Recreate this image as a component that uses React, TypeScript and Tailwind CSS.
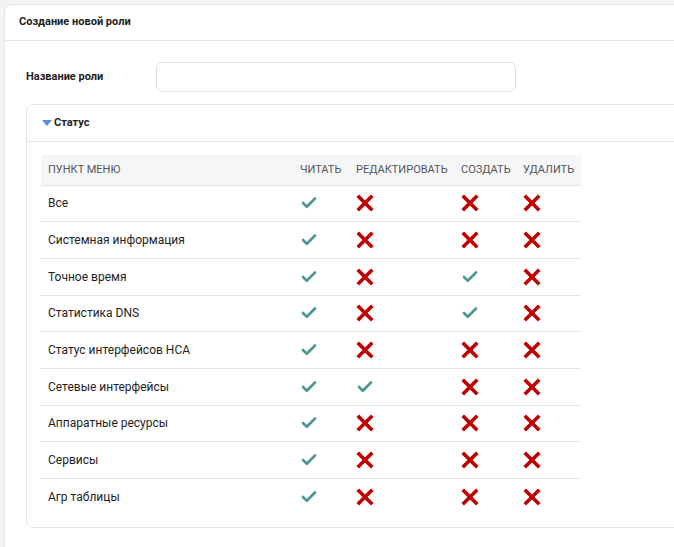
import { Check } from "lucide-react"

type Perm = { name: string; read: boolean; edit: boolean; create: boolean; remove: boolean }

const rows: Perm[] = [
  { name: "Все", read: true, edit: false, create: false, remove: false },
  { name: "Системная информация", read: true, edit: false, create: false, remove: false },
  { name: "Точное время", read: true, edit: false, create: true, remove: false },
  { name: "Статистика DNS", read: true, edit: false, create: true, remove: false },
  { name: "Статус интерфейсов НСА", read: true, edit: false, create: false, remove: false },
  { name: "Сетевые интерфейсы", read: true, edit: true, create: false, remove: false },
  { name: "Аппаратные ресурсы", read: true, edit: false, create: false, remove: false },
  { name: "Сервисы", read: true, edit: false, create: false, remove: false },
  { name: "Агр таблицы", read: true, edit: false, create: false, remove: false },
]

// heavy red cross used for denied permissions
const Cross = () => (
  <svg width="18" height="18" viewBox="0 0 18 18">
    <path d="M3 3L15 15M15 3L3 15" stroke="#c00000" strokeWidth="3.6" strokeLinecap="square" />
  </svg>
)

const Mark = ({ on }: { on: boolean }) =>
  on ? <Check className="h-[18px] w-[18px] text-[#4e9694]" strokeWidth={3.5} /> : <Cross />

export default function App() {
  return (
    <div
      className="h-[547px] overflow-hidden bg-[#f2f3f5] pl-[4px] pt-[4px] text-[#1e1e1e]"
      style={{ fontFamily: '"Roboto", "Liberation Sans", sans-serif' }}
    >
      <div className="h-[600px] w-[720px] rounded-tl-lg border border-[#e3e5e8] bg-white">
        <div className="flex h-[36px] items-center border-b border-[#e3e5e8] px-[14px] text-[11px] font-bold">
          Создание новой роли
        </div>
        <div className="px-[21px] pt-[21px]">
          <div className="flex items-center">
            <label className="w-[130px] text-[11px] font-bold">Название роли</label>
            <input className="h-[30px] w-[360px] rounded-md border border-[#dfe1e4] bg-white" />
          </div>
          <div className="mt-[12px] rounded-lg border border-[#e3e5e8] pb-[12px]">
            <div className="flex h-[37px] items-center gap-[2px] border-b border-[#e3e5e8] px-[15px] text-[11px] font-bold">
              <svg width="10" height="7" viewBox="0 0 10 7">
                <path d="M0 0h10L5 6z" fill="#5a8fd8" />
              </svg>
              Статус
            </div>
            <div className="px-[14px] pt-[13px]">
              <table className="border-collapse text-[12px]">
                <thead>
                  <tr className="h-[30px] bg-[#f5f6f8] text-left text-[11px] text-[#555]">
                    <th className="w-[252px] pl-[7px] font-normal">ПУНКТ МЕНЮ</th>
                    <th className="w-[56px] pl-[7px] font-normal">ЧИТАТЬ</th>
                    <th className="w-[105px] pl-[7px] font-normal">РЕДАКТИРОВАТЬ</th>
                    <th className="w-[62px] pl-[7px] font-normal">СОЗДАТЬ</th>
                    <th className="w-[64px] pl-[7px] pr-[7px] font-normal">УДАЛИТЬ</th>
                  </tr>
                </thead>
                <tbody>
                  {rows.map((r, i) => (
                    <tr
                      key={r.name}
                      className={
                        i < rows.length - 1
                          ? "h-[36.7px] border-y border-[#e3e5e8]"
                          : "h-[36.7px] border-t border-[#e3e5e8]"
                      }
                    >
                      <td className="pl-[7px]">{r.name}</td>
                      <td className="pl-[7px]"><Mark on={r.read} /></td>
                      <td className="pl-[7px]"><Mark on={r.edit} /></td>
                      <td className="pl-[7px]"><Mark on={r.create} /></td>
                      <td className="pl-[7px]"><Mark on={r.remove} /></td>
                    </tr>
                  ))}
                </tbody>
              </table>
            </div>
          </div>
        </div>
      </div>
    </div>
  )
}
